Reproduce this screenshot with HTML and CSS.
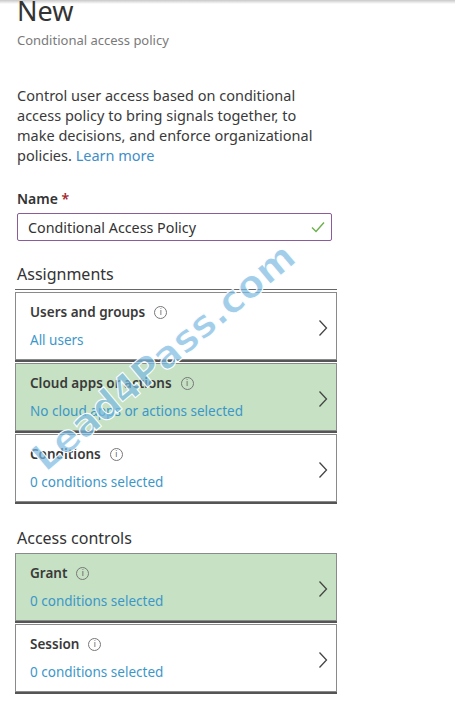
FILE: index.html
```html
<!DOCTYPE html>
<html lang="en">
<head>
    <meta charset="UTF-8">
    <meta name="viewport" content="width=device-width, initial-scale=1.0">
    <title>New - Conditional access policy</title>
    <link rel="stylesheet" href="styles.css">
</head>
<body>
    <div class="edge"></div>

    <div class="blade">
        <h1>New</h1>
        <div class="subtitle">Conditional access policy</div>

        <p class="intro">
            Control user access based on conditional access policy to bring signals together, to make decisions, and enforce organizational policies. <a href="#">Learn more</a>
        </p>

        <label class="field-label" for="policyName">Name <span class="req">*</span></label>
        <div class="input-wrap">
            <input type="text" id="policyName" value="Conditional Access Policy" />
            <svg class="check" width="14" height="12" viewBox="0 0 14 12"><path d="M1 6.5 L5 10.5 L13 1.5" fill="none" stroke="#6bb04a" stroke-width="1.4"/></svg>
        </div>

        <h2>Assignments</h2>
        <div class="cards">
            <div class="card">
                <div class="card-text">
                    <div class="card-title">Users and groups <span class="info">i</span></div>
                    <div class="card-value">All users</div>
                </div>
                <svg class="chev" width="10" height="18" viewBox="0 0 10 18"><path d="M1.5 1.5 L8.5 9 L1.5 16.5" fill="none" stroke="#444" stroke-width="1.3"/></svg>
            </div>
            <div class="card marked">
                <div class="card-text">
                    <div class="card-title">Cloud apps or actions <span class="info">i</span></div>
                    <div class="card-value">No cloud apps or actions selected</div>
                </div>
                <svg class="chev" width="10" height="18" viewBox="0 0 10 18"><path d="M1.5 1.5 L8.5 9 L1.5 16.5" fill="none" stroke="#444" stroke-width="1.3"/></svg>
            </div>
            <div class="card">
                <div class="card-text">
                    <div class="card-title">Conditions <span class="info">i</span></div>
                    <div class="card-value">0 conditions selected</div>
                </div>
                <svg class="chev" width="10" height="18" viewBox="0 0 10 18"><path d="M1.5 1.5 L8.5 9 L1.5 16.5" fill="none" stroke="#444" stroke-width="1.3"/></svg>
            </div>
        </div>

        <h2 class="second">Access controls</h2>
        <div class="cards access">
            <div class="card marked">
                <div class="card-text">
                    <div class="card-title">Grant <span class="info">i</span></div>
                    <div class="card-value">0 conditions selected</div>
                </div>
                <svg class="chev" width="10" height="18" viewBox="0 0 10 18"><path d="M1.5 1.5 L8.5 9 L1.5 16.5" fill="none" stroke="#444" stroke-width="1.3"/></svg>
            </div>
            <div class="card">
                <div class="card-text">
                    <div class="card-title">Session <span class="info">i</span></div>
                    <div class="card-value">0 conditions selected</div>
                </div>
                <svg class="chev" width="10" height="18" viewBox="0 0 10 18"><path d="M1.5 1.5 L8.5 9 L1.5 16.5" fill="none" stroke="#444" stroke-width="1.3"/></svg>
            </div>
        </div>
    </div>

    <div class="watermark">Lead4Pass.com</div>
</body>
</html>
```

FILE: styles.css
```css
body {
    font-family: 'Noto Sans', 'Open Sans', sans-serif;
    margin: 0;
    padding: 0;
    background-color: white;
    color: #333;
    overflow: hidden;
}

.edge {
    height: 4px;
    background: linear-gradient(#c8c8c8, #fff);
}

.blade {
    padding: 0 0 0 17px;
    width: 320px;
}

h1 {
    font-size: 27px;
    font-weight: 400;
    line-height: 26px;
    margin: -6px 0 0;
    color: #333;
}

.subtitle {
    font-size: 13px;
    color: #7a7a7a;
    margin-top: 7px;
}

.intro {
    width: 300px;
    font-size: 14.5px;
    line-height: 20px;
    margin: 36px 0 0;
    color: #3a3a3a;
}

.intro a {
    color: #3f8fc8;
    text-decoration: none;
}

.field-label {
    display: block;
    margin-top: 24px;
    font-size: 14px;
    font-weight: 600;
    color: #333;
}

.req {
    color: #a4262c;
}

.input-wrap {
    position: relative;
    width: 315px;
    margin-top: 5px;
}

.input-wrap input {
    box-sizing: border-box;
    width: 100%;
    height: 28px;
    border: 1px solid #8b5c9a;
    border-radius: 2px;
    padding: 0 10px;
    font-family: inherit;
    font-size: 14.3px;
    color: #333;
}

.check {
    position: absolute;
    right: 7px;
    top: 8px;
}

h2 {
    font-size: 16px;
    font-weight: 400;
    margin: 22px 0 0;
    color: #333;
}

h2.second {
    margin-top: 25px;
}

.cards {
    margin: 7px 0 0 -2px;
    width: 322px;
}

.cards.access {
    margin-top: 4px;
}

.card {
    box-sizing: border-box;
    height: 68px;
    border: 1px solid #8a8a8a;
    box-shadow: 0 2px 0 #555;
    margin-bottom: 3px;
    padding: 0 8px 0 14px;
    display: flex;
    align-items: center;
    background: white;
}

.card:first-child {
    box-shadow: 0 2px 0 #555, 0 -2px 0 #fff, 0 -3px 0 #666;
}

.cards.access .card:first-child {
    box-shadow: 0 2px 0 #555;
}

.card.marked {
    background-color: #c6e1c3;
}

.card-text {
    flex: 1;
}

.card-title {
    font-size: 13.5px;
    font-weight: 600;
    color: #3a3a3a;
    display: flex;
    align-items: center;
    gap: 9px;
}

.info {
    display: inline-flex;
    align-items: center;
    justify-content: center;
    width: 11px;
    height: 11px;
    border: 1px solid #777;
    border-radius: 50%;
    font-size: 8px;
    font-weight: 400;
    color: #555;
    line-height: 1;
}

.card-value {
    margin-top: 10px;
    font-size: 13.5px;
    color: #3c97c9;
}

.chev {
    margin-top: 4px;
}

.watermark {
    position: absolute;
    left: 0;
    top: 338px;
    width: 320px;
    text-align: center;
    transform: rotate(-40deg);
    font-family: 'DejaVu Sans', sans-serif;
    font-size: 38px;
    font-weight: bold;
    color: rgba(120, 185, 225, 0.7);
    -webkit-text-stroke: 1px white;
    pointer-events: none;
}
```
